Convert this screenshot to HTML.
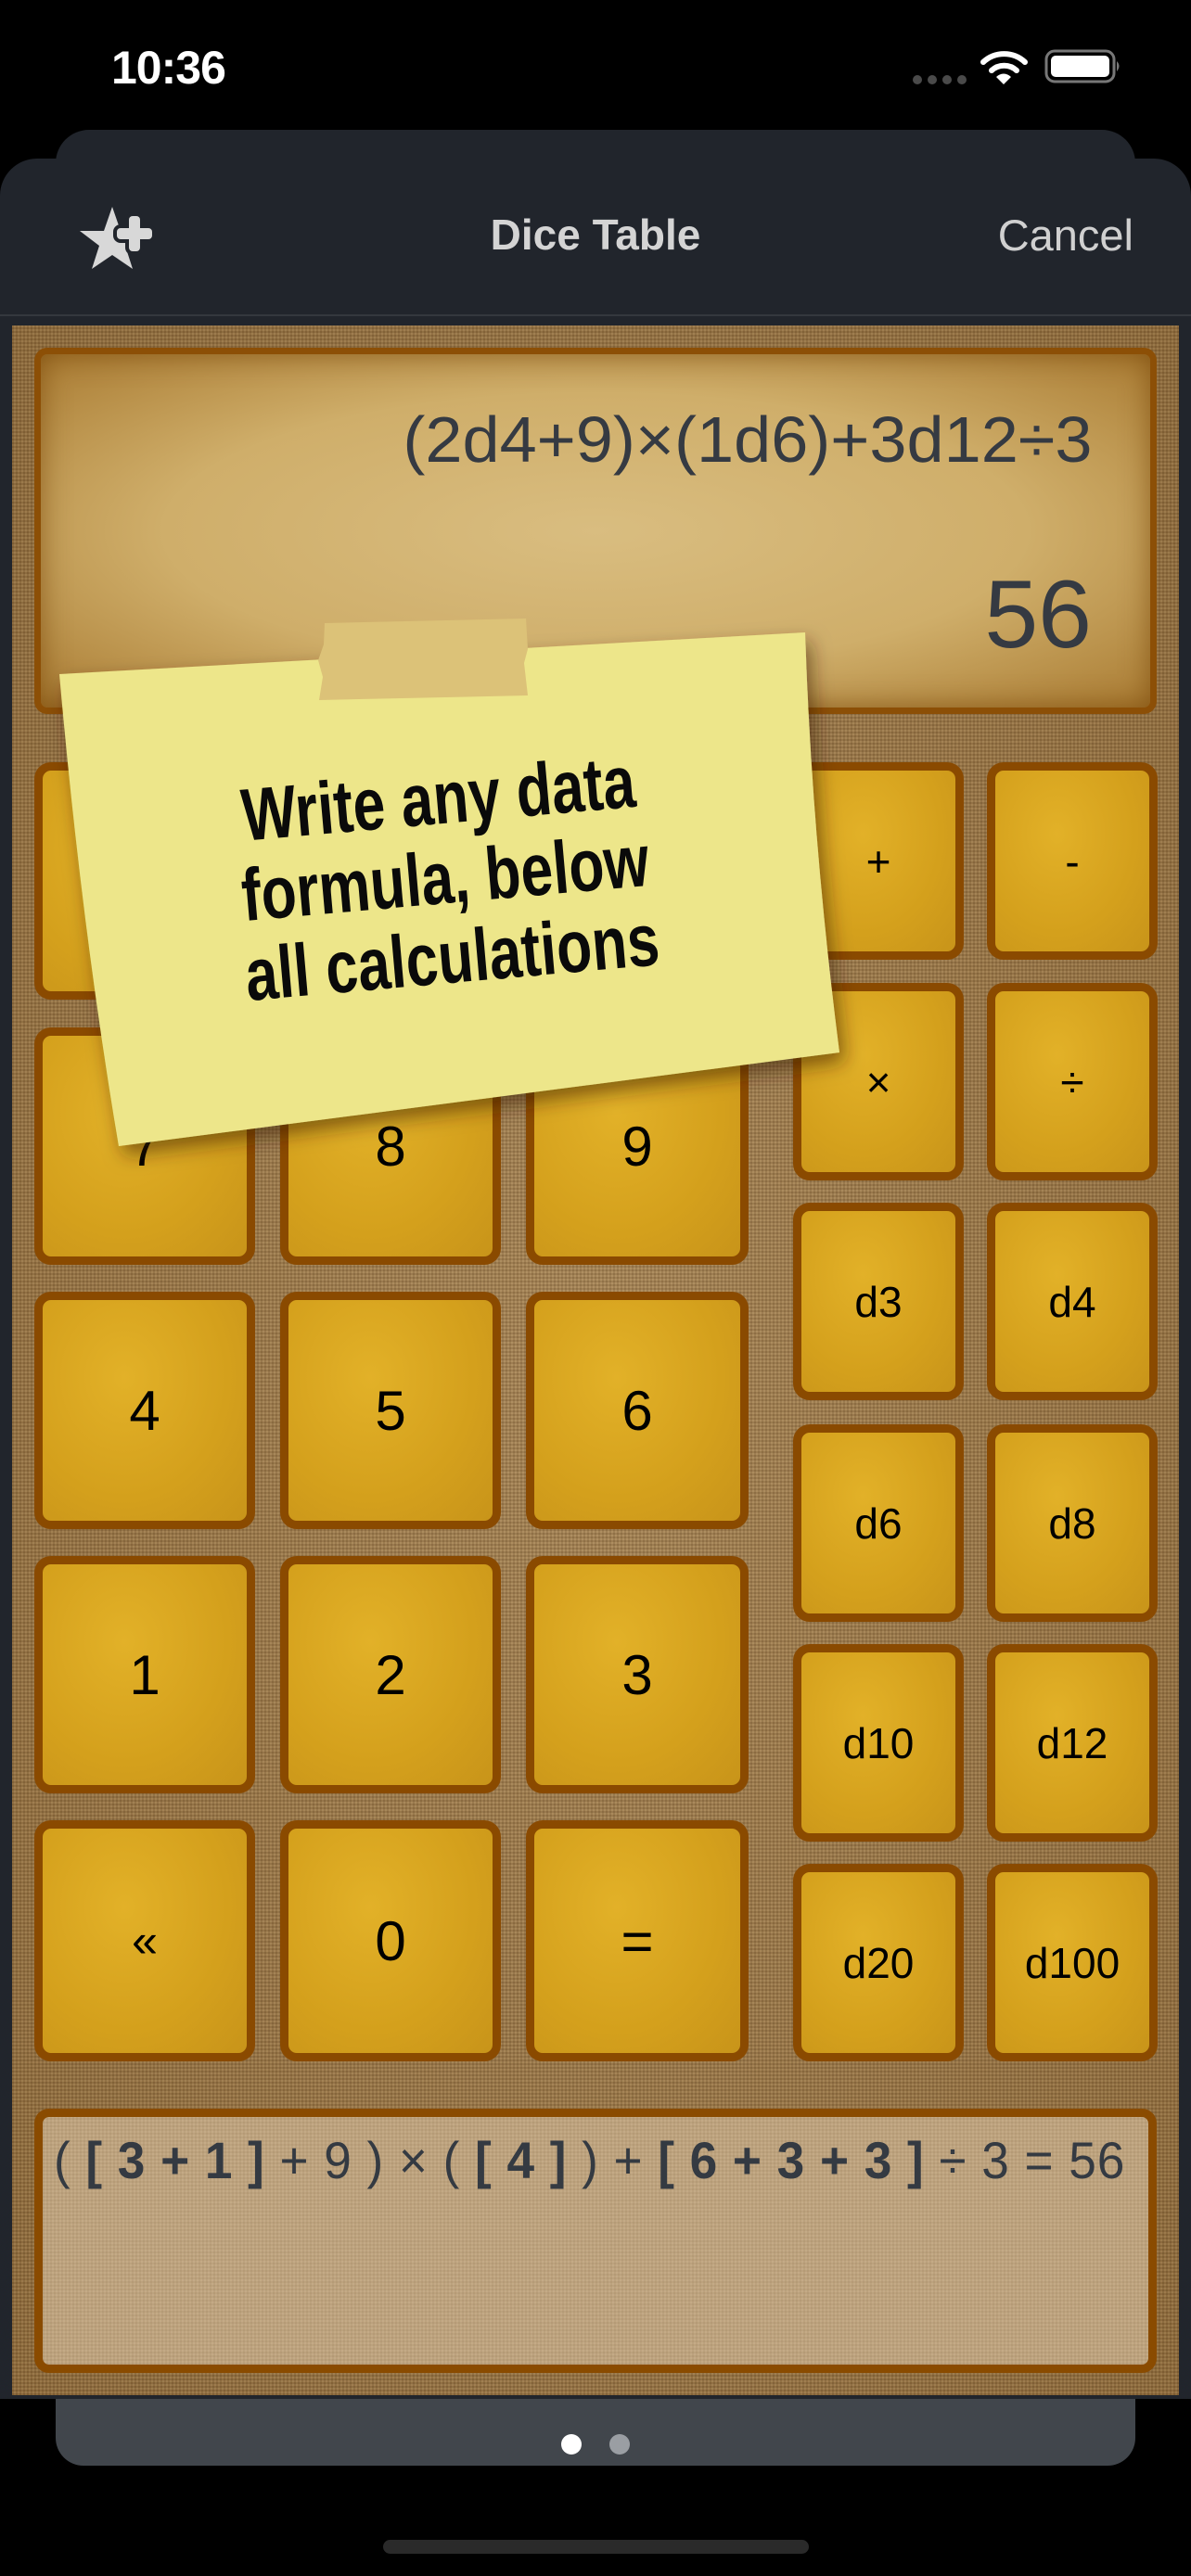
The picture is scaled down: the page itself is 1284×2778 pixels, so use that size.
<!DOCTYPE html>
<html><head><meta charset="utf-8">
<style>
*{margin:0;padding:0;box-sizing:border-box}
html,body{width:1284px;height:2778px;background:#000;overflow:hidden;font-family:"Liberation Sans",sans-serif}
.abs{position:absolute}
#back{left:60px;top:140px;width:1164px;height:80px;background:#21252c;border-radius:36px 36px 0 0}
#sheet{left:0;top:171px;width:1284px;height:2416px;background:#21252c;border-radius:40px 40px 0 0}
#sep{left:0;top:339px;width:1284px;height:2px;background:#34383e}
#content{left:13px;top:351px;width:1258px;height:2232px;background:#9b7a4c;
 background-image:repeating-linear-gradient(0deg,rgba(70,45,15,.12) 0 2px,rgba(255,230,180,.06) 2px 4px),repeating-linear-gradient(90deg,rgba(70,45,15,.12) 0 2px,rgba(255,230,180,.06) 2px 4px),radial-gradient(ellipse at 50% 50%,#a8875a,#8d6a3c);overflow:hidden}
#disp{left:37px;top:375px;width:1210px;height:395px;border:7px solid #8c4f06;border-radius:14px;
 background:radial-gradient(ellipse at 50% 50%,#d9bd80 0%,#cfae6a 55%,#a97b32 100%);
 box-shadow:inset 0 0 30px rgba(110,60,0,.6)}
.key{position:absolute;border:9px solid #8a4a00;border-radius:18px;
 background:radial-gradient(ellipse at 40% 35%,#e2b128,#d4a01c 60%,#c8941a);
 display:flex;align-items:center;justify-content:center;color:#000;font-size:60px}
.r{font-size:46px}
#bot{left:37px;top:2274px;width:1210px;height:285px;border:9px solid #8a4b00;border-radius:16px;
 background:#c4aa86;background-image:repeating-linear-gradient(0deg,rgba(120,90,50,.1) 0 2px,transparent 2px 4px),repeating-linear-gradient(90deg,rgba(120,90,50,.1) 0 2px,transparent 2px 4px)}
#pager{left:60px;top:2587px;width:1164px;height:72px;background:#41464c;border-radius:0 0 30px 30px}
</style></head><body>
<div class="abs" style="left:120px;top:44px;color:#fff;font-size:50px;font-weight:bold;letter-spacing:-1px">10:36</div>
<svg class="abs" style="left:975px;top:50px" width="240" height="50" viewBox="975 50 240 50">
 <circle cx="989" cy="86" r="5" fill="#4a4a4a"/><circle cx="1005" cy="86" r="5" fill="#4a4a4a"/><circle cx="1021" cy="86" r="5" fill="#4a4a4a"/><circle cx="1037" cy="86" r="5" fill="#4a4a4a"/>
 <path d="M1060 67 A33 33 0 0 1 1105 67" stroke="#fff" stroke-width="6" fill="none" stroke-linecap="round"/>
 <path d="M1069 76 A20 20 0 0 1 1096 76" stroke="#fff" stroke-width="6" fill="none" stroke-linecap="round"/>
 <path d="M1074 83 L1082 91 L1090 83 A11 11 0 0 0 1074 83Z" fill="#fff"/>
 <rect x="1128" y="55" width="73" height="33" rx="9" fill="none" stroke="#777" stroke-width="3"/>
 <rect x="1133" y="60" width="63" height="23" rx="5" fill="#fff"/>
 <path d="M1204 66 q5 5 0 11z" fill="#777"/>
</svg>
<div class="abs" id="back"></div>
<div class="abs" id="sheet"></div>
<svg class="abs" style="left:80px;top:215px" width="100" height="80" viewBox="80 215 100 80">
 <polygon points="121,223 130,249 157,249 135,265 143,290 121,275 99,290 107,265 86,249 112,249" fill="#d8d8d8"/>
 <g stroke="#21252c" stroke-width="8" stroke-linejoin="round">
  <rect x="126" y="246" width="38" height="12" rx="4" fill="#21252c"/>
  <rect x="139" y="233" width="12" height="38" rx="4" fill="#21252c"/>
 </g>
 <rect x="126" y="246" width="38" height="12" rx="4" fill="#d8d8d8"/>
 <rect x="139" y="233" width="12" height="38" rx="4" fill="#d8d8d8"/>
</svg>
<div class="abs" style="left:0;width:1284px;top:226px;text-align:center;color:#d4d4d4;font-size:46px;font-weight:bold">Dice Table</div>
<div class="abs" style="right:62px;top:226px;color:#d0d0d0;font-size:47px">Cancel</div>
<div class="abs" id="sep"></div>
<div class="abs" id="content"></div>
<div class="abs" id="disp">
 <div class="abs" style="right:63px;top:52px;font-size:70px;color:#353a42;white-space:nowrap;transform:scaleX(1.03);transform-origin:100% 0">(2d4+9)×(1d6)+3d12÷3</div>
 <div class="abs" style="right:63px;top:222px;font-size:104px;color:#353a42">56</div>
</div>

<div class="key" style="left:37px;top:822px;width:238px;height:256px">(</div>
<div class="key" style="left:302px;top:822px;width:238px;height:256px">)</div>
<div class="key" style="left:567px;top:822px;width:240px;height:256px">C</div>
<div class="key" style="left:37px;top:1108px;width:238px;height:256px">7</div>
<div class="key" style="left:302px;top:1108px;width:238px;height:256px">8</div>
<div class="key" style="left:567px;top:1108px;width:240px;height:256px">9</div>
<div class="key" style="left:37px;top:1393px;width:238px;height:256px">4</div>
<div class="key" style="left:302px;top:1393px;width:238px;height:256px">5</div>
<div class="key" style="left:567px;top:1393px;width:240px;height:256px">6</div>
<div class="key" style="left:37px;top:1678px;width:238px;height:256px">1</div>
<div class="key" style="left:302px;top:1678px;width:238px;height:256px">2</div>
<div class="key" style="left:567px;top:1678px;width:240px;height:256px">3</div>
<div class="key" style="left:37px;top:1963px;width:238px;height:260px;font-size:50px">«</div>
<div class="key" style="left:302px;top:1963px;width:238px;height:260px">0</div>
<div class="key" style="left:567px;top:1963px;width:240px;height:260px">=</div>

<div class="key r" style="left:855px;top:822px;width:184px;height:213px">+</div>
<div class="key r" style="left:1064px;top:822px;width:184px;height:213px">-</div>
<div class="key r" style="left:855px;top:1060px;width:184px;height:213px">×</div>
<div class="key r" style="left:1064px;top:1060px;width:184px;height:213px">÷</div>
<div class="key r" style="left:855px;top:1297px;width:184px;height:213px">d3</div>
<div class="key r" style="left:1064px;top:1297px;width:184px;height:213px">d4</div>
<div class="key r" style="left:855px;top:1536px;width:184px;height:213px">d6</div>
<div class="key r" style="left:1064px;top:1536px;width:184px;height:213px">d8</div>
<div class="key r" style="left:855px;top:1773px;width:184px;height:213px">d10</div>
<div class="key r" style="left:1064px;top:1773px;width:184px;height:213px">d12</div>
<div class="key r" style="left:855px;top:2010px;width:184px;height:213px">d20</div>
<div class="key r" style="left:1064px;top:2010px;width:184px;height:213px">d100</div>

<div class="abs" id="bot">
 <div class="abs" style="left:12px;top:14px;font-size:56px;color:#343a42;white-space:pre;transform:scaleX(0.95);transform-origin:0 0;letter-spacing:1px">( <b>[ 3 + 1 ]</b> + 9 ) × ( <b>[ 4 ]</b> ) + <b>[ 6 + 3 + 3 ]</b> ÷ 3 = 56</div>
</div>

<!-- sticky note -->
<svg class="abs" style="left:0;top:640px" width="1000" height="640" viewBox="0 640 1000 640">
 <defs><filter id="sh" x="-10%" y="-10%" width="130%" height="130%"><feDropShadow dx="6" dy="10" stdDeviation="10" flood-color="#3a2200" flood-opacity="0.55"/></filter></defs>
 <path d="M64 727 L868 682 Q875 900 905 1135 L128 1236 Q88 1000 64 727Z" fill="#ede68a" filter="url(#sh)"/>
 <path d="M350 672 L567 667 L569 700 L565 715 L569 750 L344 755 L348 730 L343 712 L349 695Z" fill="#dcc278"/>
</svg>
<div class="abs" style="left:180px;top:818px;width:600px;text-align:center;font-family:'Liberation Sans Narrow','Liberation Sans',sans-serif;font-weight:bold;font-size:80px;line-height:86px;color:#0a0a0a;transform:rotate(-5deg) scaleX(0.78);transform-origin:50% 50%">Write any data<br>formula, below<br>all calculations</div>

<div class="abs" id="pager"></div>
<div class="abs" style="left:605px;top:2625px;width:22px;height:22px;border-radius:50%;background:#fff"></div>
<div class="abs" style="left:657px;top:2625px;width:22px;height:22px;border-radius:50%;background:#9a9ea3"></div>
<div class="abs" style="left:413px;top:2739px;width:459px;height:15px;border-radius:8px;background:#2a2a2a"></div>
</body></html>
